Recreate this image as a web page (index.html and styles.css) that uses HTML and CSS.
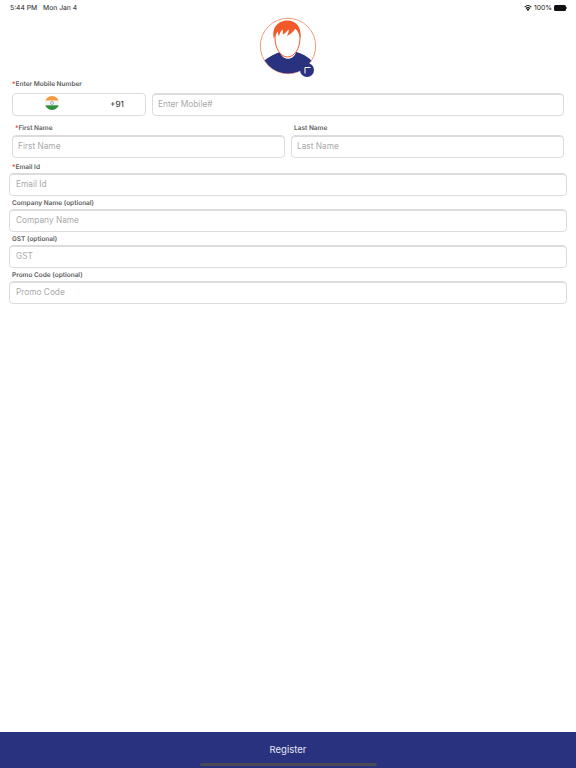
FILE: index.html
```html
<!DOCTYPE html>
<html lang="en">
<head>
    <meta charset="UTF-8">
    <title>Register</title>
    <link rel="stylesheet" href="styles.css">
</head>
<body>
    <div class="page">
        <div class="status-bar">
            <span class="status-time">5:44 PM&nbsp;&nbsp; Mon Jan 4</span>
            <div class="status-right">
                <svg class="wifi" width="8" height="6" viewBox="0 0 20 15">
                    <path d="M10 15 L6.6 11 A5 5 0 0 1 13.4 11 Z" fill="#111"/>
                    <path d="M4.8 8.8 A8 8 0 0 1 15.2 8.8" fill="none" stroke="#111" stroke-width="2.6"/>
                    <path d="M1.6 5.2 A12.6 12.6 0 0 1 18.4 5.2" fill="none" stroke="#111" stroke-width="2.6"/>
                </svg>
                <span>100%</span>
                <div class="battery"></div>
            </div>
        </div>

        <div class="avatar-row">
            <svg class="avatar" width="60" height="60" viewBox="0 0 60 60">
                <defs>
                    <clipPath id="circle-clip"><circle cx="29" cy="29" r="27.5"/></clipPath>
                </defs>
                <circle cx="29" cy="29" r="27.7" fill="#fff" stroke="#f59a7c" stroke-width="1"/>
                <g clip-path="url(#circle-clip)">
                    <path d="M4 45 C9 40 15 37 21 35 C23 44 35 44 37 35 C45 37 52 41 57 50 L57 60 L1 60 Z" fill="#29327f"/>
                </g>
                <path d="M16 21 C16 32 22 40 28.500 40 C35 40 41 32 41 21 C41 13 35 9 28.500 9 C22 9 16 13 16 21 Z" fill="#fff" stroke="#ee5a2c" stroke-width="1"/>
                <path d="M15 22 C12 10 20 3.500 28.500 3.500 C37 3.500 43 10 41.500 22 C41 18 39.500 14.500 36.500 11.500 C34.500 14.500 31.500 17.500 28 19 C29.500 16 30 14 29.500 12.500 C27.500 15 25.500 17 23.500 17.500 C24 15.500 24 13.500 23.500 12.500 C21.500 14 20.500 17 20 19.500 C19 17.500 19 15.500 19 14.500 C17 16.500 15.500 19 15 22 Z" fill="#f25a29"/>
                <circle cx="48" cy="53" r="7" fill="#29327f"/>
                <path d="M46 56.500 V50.500 H51.500" fill="none" stroke="#fff" stroke-width="1"/>
            </svg>
        </div>

        <form class="form">
            <label class="field-label phone-label"><span class="req">*</span>Enter Mobile Number</label>
            <div class="row phone-row">
                <div class="country-box">
                    <svg class="flag" width="14" height="14" viewBox="0 0 14 14">
                        <defs>
                            <clipPath id="flag-clip"><circle cx="7" cy="7" r="7"/></clipPath>
                        </defs>
                        <g clip-path="url(#flag-clip)">
                            <rect width="14" height="4.700" fill="#f39a3c"/>
                            <rect y="4.700" width="14" height="4.600" fill="#f4f4f4"/>
                            <rect y="9.300" width="14" height="4.700" fill="#2f8f3a"/>
                        </g>
                        <circle cx="7" cy="7" r="1.500" fill="none" stroke="#7a80b5" stroke-width="0.600"/>
                    </svg>
                    <span class="dial-code">+91</span>
                </div>
                <input class="text-input grow" type="text" placeholder="Enter Mobile#">
            </div>

            <div class="row name-labels">
                <label class="field-label grow first-label"><span class="req">*</span>First Name</label>
                <label class="field-label grow last-label">Last Name</label>
            </div>
            <div class="row">
                <input class="text-input grow half" type="text" placeholder="First Name">
                <input class="text-input grow half" type="text" placeholder="Last Name">
            </div>

            <div class="wide-fields">
                <label class="field-label"><span class="req">*</span>Email Id</label>
                <input class="text-input" type="text" placeholder="Email Id">
                <label class="field-label">Company Name (optional)</label>
                <input class="text-input" type="text" placeholder="Company Name">
                <label class="field-label">GST (optional)</label>
                <input class="text-input" type="text" placeholder="GST">
                <label class="field-label">Promo Code (optional)</label>
                <input class="text-input" type="text" placeholder="Promo Code">
            </div>
        </form>

        <div class="footer">
            <button type="button" class="register-btn">Register</button>
            <div class="home-indicator"></div>
        </div>
    </div>
</body>
</html>
```

FILE: styles.css
```css
* {
    box-sizing: border-box;
}
body {
    margin: 0;
    background: white;
    font-family: Inter, "Liberation Sans", sans-serif;
    text-rendering: geometricPrecision;
}
.page {
    display: flex;
    flex-direction: column;
    height: 768px;
    overflow: hidden;
}
.status-bar {
    display: flex;
    justify-content: space-between;
    align-items: center;
    height: 14px;
    padding: 1px 10px 0;
    font-size: 6.8px;
    color: #222;
}
.status-right {
    display: flex;
    align-items: center;
    gap: 2px;
}
.battery {
    position: relative;
    width: 12px;
    height: 6px;
    border-radius: 1.5px;
    background: #111;
}
.battery::after {
    content: "";
    position: absolute;
    top: 2px;
    right: -1px;
    width: 1px;
    height: 2px;
    background: #777;
}
.avatar-row {
    display: flex;
    justify-content: center;
    height: 63px;
    padding-top: 3px;
    padding-left: 2px;
}
.form {
    display: flex;
    flex-direction: column;
}
.field-label {
    display: block;
    font-size: 6.5px;
    line-height: 10px;
    font-weight: 600;
    color: #5c5c5c;
}
.req {
    color: #e0413a;
}
.phone-label {
    margin: 2px 0 4px 12px;
}
.row {
    display: flex;
    gap: 6px;
    padding: 0 12px;
}
.grow {
    flex: 1;
}
.half {
    width: 0;
}
.country-box {
    display: flex;
    align-items: center;
    justify-content: space-between;
    width: 134px;
    height: 22.5px;
    padding: 0 21px 0 32px;
    border: 1px solid #dcdcdc;
    border-radius: 4px;
}
.flag {
    margin-bottom: 2px;
}
.dial-code {
    padding-top: 1px;
    font-size: 8.3px;
    color: #222;
}
.text-input {
    height: 22.5px;
    padding: 0 5px;
    border: 1px solid #dcdcdc;
    border-radius: 4px;
    outline: none;
    box-shadow: inset 0 1px 0 #dcdcdc;
    background: white;
    font-family: inherit;
    font-size: 8.3px;
    color: #222;
}
.text-input::placeholder {
    color: #aaa;
    opacity: 1;
}
.name-labels {
    height: 8px;
    margin-top: 8.5px;
}
.first-label {
    padding-left: 3px;
}
.last-label {
    padding-left: 3px;
}
.name-labels .field-label {
    line-height: 8px;
}
.name-labels + .row {
    margin-top: 3px;
}
.wide-fields {
    display: flex;
    flex-direction: column;
    padding: 4.5px 9px 0;
}
.wide-fields .field-label {
    height: 11px;
    padding-left: 3px;
    line-height: 10.5px;
}
.wide-fields .text-input {
    margin-bottom: 2.5px;
    padding: 0 6px;
}
.footer {
    display: flex;
    flex-direction: column;
    align-items: center;
    height: 36px;
    margin-top: auto;
    background: #29327f;
}
.register-btn {
    height: 28px;
    margin-top: 3px;
    border: none;
    background: none;
    font-family: inherit;
    font-size: 9.5px;
    color: #e4e6f2;
}
.home-indicator {
    width: 177px;
    height: 3px;
    border-radius: 2px;
    background: #4a4a55;
}
```
